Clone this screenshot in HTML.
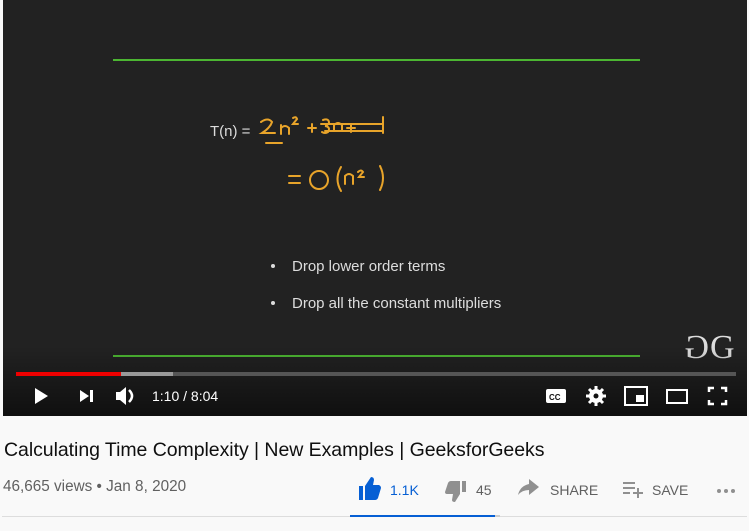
<!DOCTYPE html>
<html><head><meta charset="utf-8"><style>
body{margin:0;width:749px;height:531px;background:#f9f9f9;font-family:"Liberation Sans",sans-serif;position:relative;overflow:hidden}
.v{position:absolute;left:3px;top:0;width:744px;height:416px;background:#222}
.grad{position:absolute;left:0;right:0;bottom:0;height:70px;background:linear-gradient(rgba(0,0,0,0),rgba(0,0,0,.55))}
.gl{position:absolute;height:2px;background:#4cb632}
.t{position:absolute;color:#0f0f0f}
</style></head><body>
<div class="v">
<div class="gl" style="left:110px;top:59px;width:527px"></div>
<div class="gl" style="left:110px;top:355px;width:527px"></div>
<svg style="position:absolute;left:0;top:0" width="744" height="360">
<text x="207" y="136" fill="#ddd" font-size="15" font-family="Liberation Sans">T(n) =</text>
<g fill="none" stroke="#e8a42a" stroke-width="2" stroke-linecap="round">
<path d="M258 122 q7-5 11 0 q-2 6-10 11 h13"/>
<path d="M278 134 v-9 M278 128 q4-4 8 0 v6"/>
<path d="M290 118 q3-2 4 1 l-4 5 h5"/>
<path d="M305 128 h8 M309 124 v8"/>
<path d="M320 120 q6-2 6 3 q-2 3-4 3 q6 1 3 6 q-3 2-6 0"/>
<path d="M331 131 v-6 q4-4 8 0 v6"/>
<path d="M344 128 h8 M348 124 v8 M380 117 v16"/>
<path d="M318 124 h62 M322 131 h58"/>
<path d="M263 143 h16"/>
<path d="M286 176 h11 M286 183 h11"/>
<ellipse cx="316" cy="180" rx="9" ry="9"/>
<path d="M338 167 q-7 12 0 24 M342 184 v-8 q4-4 8 0 v8 M355 172 q3-3 5 0 l-4 5 h5 M377 166 q6 12 0 24"/>
</g>
<circle cx="270" cy="266" r="2" fill="#ddd"/>
<text x="289" y="271" fill="#ddd" font-size="15" font-family="Liberation Sans">Drop lower order terms</text>
<circle cx="270" cy="303" r="2" fill="#ddd"/>
<text x="289" y="308" fill="#ddd" font-size="15" font-family="Liberation Sans">Drop all the constant multipliers</text>
<text x="-706" y="358" transform="scale(-1,1)" fill="#ddd" font-size="34" font-family="Liberation Serif">G</text>
<text x="707" y="358" fill="#ddd" font-size="34" font-family="Liberation Serif">G</text>
</svg>
<div class="grad"></div>
<div style="position:absolute;left:13px;top:372px;width:720px;height:4px;background:#555"></div>
<div style="position:absolute;left:118px;top:372px;width:52px;height:4px;background:#999"></div>
<div style="position:absolute;left:13px;top:372px;width:105px;height:4px;background:#e00"></div>
<svg style="position:absolute;left:0;top:380px" width="744" height="36" fill="#fff">
<path d="M32 8 l13 8 l-13 8z"/>
<path d="M77 10 l9 6 l-9 6z M87 10 h3 v12 h-3z"/>
<path d="M113 12 h4 l6-5 v18 l-6-5 h-4z"/>
<path d="M126 10 q6 6 0 12" stroke="#fff" stroke-width="2.5" fill="none"/>
<text x="149" y="21" font-size="14" font-family="Liberation Sans">1:10 / 8:04</text>
<rect x="543" y="9" width="20" height="14" rx="2"/>
<text x="546" y="20" font-size="8" fill="#111" font-weight="bold" font-family="Liberation Sans">CC</text>
<circle cx="593" cy="16" r="7"/>
<path d="M593 6 v20 M583 16 h20 M586 9 l14 14 M600 9 l-14 14" stroke="#fff" stroke-width="3"/>
<circle cx="593" cy="16" r="2.5" fill="#111"/>
<rect x="622" y="7" width="22" height="18" fill="none" stroke="#fff" stroke-width="2"/>
<rect x="633" y="15" width="8" height="7"/>
<rect x="664" y="10" width="20" height="13" fill="none" stroke="#fff" stroke-width="2"/>
<path d="M706 12 v-4 h5 M718 8 h5 v4 M723 20 v4 h-5 M711 24 h-5 v-4" stroke="#fff" stroke-width="2.5" fill="none"/>
</svg>
</div>
<div class="t" style="left:4px;top:439px;font-size:19.5px;letter-spacing:-0.05px">Calculating Time Complexity | New Examples | GeeksforGeeks</div>
<div class="t" style="left:3px;top:478px;font-size:15.3px;color:#606060">46,665 views • Jan 8, 2020</div>
<svg style="position:absolute;left:355px;top:476px" width="390" height="28">
<path d="M4 10 h4 v14 h-4z M10 10 l6-9 q3 0 3 3 l-1 5 h6 q2 1 2 3 l-3 10 q-1 2-3 2 h-10z" fill="#065fd4"/>
<text x="35" y="19" font-size="14" fill="#065fd4" font-family="Liberation Sans">1.1K</text>
<path d="M107 5 h4 v11 h-4z M105 5 h-9 q-2 0-3 2 l-3 9 q0 2 2 2 h6 l-1 6 q0 2 3 2 l5-8z" fill="#909090"/>
<text x="121" y="19" font-size="14" fill="#606060" font-family="Liberation Sans">45</text>
<path d="M174 8 v-5 l10 8 l-10 8 v-5 q-7 0-11 5 q2-9 11-11z" fill="#909090"/>
<text x="195" y="19" font-size="14" fill="#606060" font-family="Liberation Sans">SHARE</text>
<path d="M268 7 h12 M268 12 h12 M268 17 h7 M278 17 h10 M283 12 v10" stroke="#909090" stroke-width="2"/>
<text x="297" y="19" font-size="14" fill="#606060" font-family="Liberation Sans">SAVE</text>
<circle cx="364" cy="15" r="2" fill="#909090"/><circle cx="371" cy="15" r="2" fill="#909090"/><circle cx="378" cy="15" r="2" fill="#909090"/>
</svg>
<div style="position:absolute;left:2px;top:516px;width:745px;height:1px;background:#ddd"></div>
<div style="position:absolute;left:350px;top:515px;width:145px;height:2px;background:#065fd4"></div>
<div style="position:absolute;left:495px;top:515px;width:5px;height:2px;background:#ccc"></div>
</body></html>
